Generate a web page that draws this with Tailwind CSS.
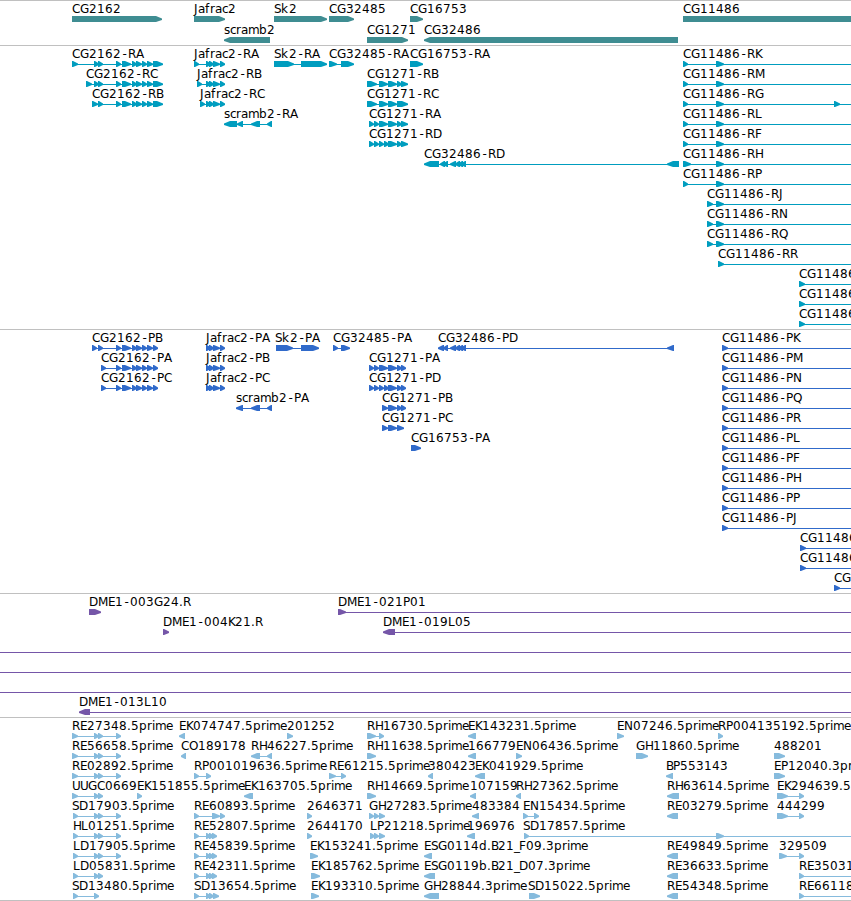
<!DOCTYPE html>
<html lang="en">
  <head>
    <meta charset="UTF-8" />
    <meta name="viewport" content="width=device-width, initial-scale=1.0" />
    <title>Genome Browser</title>
    <script src="https://cdn.jsdelivr.net/npm/@tailwindcss/browser@4"></script>
  </head>
  <body class="bg-white overflow-hidden">
    <main class="w-[851px] h-[901px] flex flex-col overflow-hidden border-b border-[#c0c0c0]">
      <section id="genes" class="border-t border-[#c0c0c0] pt-0.5 text-[#3f8d92]"></section>
      <section id="transcripts" class="border-t border-[#c0c0c0] pt-0.5 pb-px text-[#009dbf]"></section>
      <section id="proteins" class="border-t border-[#c0c0c0] pt-0.5 pb-px text-[#306aca]"></section>
      <section id="bacs" class="border-t border-[#c0c0c0] pt-0.5 pb-px text-[#7556a8]"></section>
      <section id="ests" class="border-t border-[#c0c0c0] pt-0.5 text-[#86bbdd]"></section>
    </main>

    <script>
      const EDGE = 860;

      // --- Exon sets shared by several features ---
      const cg2162 = [[98, 103], [116, 121], [122, 131], [132, 137], [136, 142], [142, 147], [147, 153]];
      const jafrac = [[206, 211], [209, 214], [213, 220], [220, 225]];
      const tail486 = [[450, 456], [455, 460], [458, 463], [461, 466]];
      const long11486 = [[683, 688], [716, 724]];
      const mid11486 = [[707, 713], [716, 724]];
      const est72 = [[72, 78], [94, 99], [98, 103], [116, 121]];
      const est73 = [[73, 78], [94, 99], [98, 103], [116, 121]];
      const est194 = [[194, 199], [206, 211], [209, 214], [212, 217]];

      // Each feature: [label, label x, direction, exons, line end]
      const tracks = {
        genes: [
          [
            ["CG2162", 72, 1, [[72, 162]]],
            ["Jafrac2", 194, 1, [[194, 225]]],
            ["Sk2", 274, 1, [[274, 327]]],
            ["CG32485", 329, 1, [[329, 354]]],
            ["CG16753", 410, 1, [[410, 423]]],
            ["CG11486", 683, 1, [[683, EDGE]]],
          ],
          [
            ["scramb2", 224, -1, [[224, 270]]],
            ["CG1271", 367, 1, [[367, 408]]],
            ["CG32486", 424, -1, [[424, 678]]],
          ],
        ],
        transcripts: [
          [
            ["CG2162-RA", 72, 1, [[72, 78], [94, 99], ...cg2162, [153, 163]]],
            ["Jafrac2-RA", 194, 1, [[194, 199], ...jafrac]],
            ["Sk2-RA", 274, 1, [[274, 294], [301, 327]]],
            ["CG32485-RA", 329, 1, [[329, 337], [341, 354]]],
            ["CG16753-RA", 410, 1, [[410, 423]]],
            ["CG11486-RK", 683, 1, long11486, EDGE],
          ],
          [
            ["CG2162-RC", 86, 1, [[86, 92], [94, 99], ...cg2162, [153, 163]]],
            ["Jafrac2-RB", 197, 1, [[197, 202], ...jafrac]],
            ["CG1271-RB", 367, 1, [[367, 377], [379, 388], [388, 397], [397, 402], [401, 408]]],
            ["CG11486-RM", 683, 1, long11486, EDGE],
          ],
          [
            ["CG2162-RB", 92, 1, [[92, 98], ...cg2162, [153, 163]]],
            ["Jafrac2-RC", 200, 1, [[200, 205], ...jafrac]],
            ["CG1271-RC", 367, 1, [[367, 377], [379, 388], [388, 397], [397, 408]]],
            ["CG11486-RG", 683, 1, [...long11486, [834, 840]], EDGE],
          ],
          [
            ["scramb2-RA", 224, -1, [[224, 237], [237, 243], [251, 260], [267, 272]]],
            ["CG1271-RA", 369, 1, [[369, 374], [374, 379], [379, 388], [388, 397], [397, 402], [401, 408]]],
            ["CG11486-RL", 683, 1, long11486, EDGE],
          ],
          [
            ["CG1271-RD", 369, 1, [[369, 374], [374, 379], [379, 384], [384, 389], [388, 397], [397, 402], [401, 408]]],
            ["CG11486-RF", 683, 1, long11486, EDGE],
          ],
          [
            ["CG32486-RD", 424, -1, [[424, 439], [440, 445], [443, 448], ...tail486, [667, 679]]],
            ["CG11486-RH", 683, 1, [[683, 691], [716, 724]], EDGE],
          ],
          [["CG11486-RP", 683, 1, long11486, EDGE]],
          [["CG11486-RJ", 707, 1, mid11486, EDGE]],
          [["CG11486-RN", 707, 1, mid11486, EDGE]],
          [["CG11486-RQ", 707, 1, mid11486, EDGE]],
          [["CG11486-RR", 718, 1, [[718, 724]], EDGE]],
          [["CG11486", 799, 1, [[799, 805]], EDGE]],
          [["CG11486", 799, 1, [[799, 805]], EDGE]],
          [["CG11486", 799, 1, [[799, 805]], EDGE]],
        ],
        proteins: [
          [
            ["CG2162-PB", 92, 1, [[92, 97], ...cg2162, [153, 158]]],
            ["Jafrac2-PA", 206, 1, jafrac],
            ["Sk2-PA", 275, 1, [[276, 293], [301, 319]]],
            ["CG32485-PA", 333, 1, [[333, 338], [341, 350]]],
            ["CG32486-PD", 438, -1, [[438, 444], [443, 448], ...tail486, [667, 674]]],
            ["CG11486-PK", 722, 1, [[722, 728]], EDGE],
          ],
          [
            ["CG2162-PA", 101, 1, [[101, 106], ...cg2162.slice(1), [153, 158]]],
            ["Jafrac2-PB", 206, 1, jafrac],
            ["CG1271-PA", 369, 1, [[369, 374], [374, 379], [379, 388], [388, 397], [397, 402], [401, 406]]],
            ["CG11486-PM", 722, 1, [[722, 728]], EDGE],
          ],
          [
            ["CG2162-PC", 101, 1, [[101, 106], ...cg2162.slice(1), [153, 158]]],
            ["Jafrac2-PC", 206, 1, jafrac],
            ["CG1271-PD", 369, 1, [[369, 374], [374, 379], [379, 384], [384, 389], [388, 397], [397, 402], [401, 406]]],
            ["CG11486-PN", 722, 1, [[722, 728]], EDGE],
          ],
          [
            ["scramb2-PA", 236, -1, [[236, 243], [251, 260], [267, 272]]],
            ["CG1271-PB", 382, 1, [[382, 388], [388, 397], [397, 402], [401, 406]]],
            ["CG11486-PQ", 722, 1, [[722, 728]], EDGE],
          ],
          [
            ["CG1271-PC", 382, 1, [[382, 388], [388, 397], [397, 404]]],
            ["CG11486-PR", 722, 1, [[722, 728]], EDGE],
          ],
          [
            ["CG16753-PA", 411, 1, [[411, 421]]],
            ["CG11486-PL", 722, 1, [[722, 728]], EDGE],
          ],
          [["CG11486-PF", 722, 1, [[722, 728]], EDGE]],
          [["CG11486-PH", 722, 1, [[722, 728]], EDGE]],
          [["CG11486-PP", 722, 1, [[722, 728]], EDGE]],
          [["CG11486-PJ", 722, 1, [[722, 728]], EDGE]],
          [["CG11486", 800, 1, [[800, 806]], EDGE]],
          [["CG11486", 800, 1, [[800, 806]], EDGE]],
          [["CG11486", 834, 1, [[834, 840]], EDGE]],
        ],
        bacs: [
          [
            ["DME1-003G24.R", 89, 1, [[89, 101]]],
            ["DME1-021P01", 338, 1, [[338, 346]], EDGE],
          ],
          [
            ["DME1-004K21.R", 163, 1, [[163, 169]]],
            ["DME1-019L05", 383, -1, [[383, 395]], EDGE],
          ],
          [["", 0, 1, [[-10, -5]], EDGE]],
          [["", 0, 1, [[-10, -5]], EDGE]],
          [["", 0, 1, [[-10, -5]], EDGE]],
          [["DME1-013L10", 79, -1, [[79, 90]], EDGE]],
        ],
        ests: [
          [
            ["RE27348.5prime", 72, 1, est72],
            ["EK074747.5prime", 179, -1, [[179, 185]]],
            ["201252", 287, 1, [[287, 293]]],
            ["RH16730.5prime", 367, 1, [[367, 376], [379, 384]]],
            ["EK143231.5prime", 468, -1, [[468, 476]]],
            ["EN07246.5prime", 617, 1, [[617, 624]]],
            ["RP004135192.5prime", 718, 1, [[718, 723]]],
          ],
          [
            ["RE56658.5prime", 72, 1, est72],
            ["CO189178", 181, -1, [[181, 186]]],
            ["RH46227.5prime", 251, -1, [[251, 260], [267, 272]]],
            ["RH11638.5prime", 367, 1, [[367, 376]]],
            ["166779", 468, -1, [[468, 476]]],
            ["EN06436.5prime", 516, 1, [[516, 522]]],
            ["GH11860.5prime", 636, 1, [[636, 648]]],
            ["488201", 774, 1, [[774, 785]]],
          ],
          [
            ["RE02892.5prime", 72, 1, est72],
            ["RP001019636.5prime", 194, 1, [[194, 199], [206, 211]]],
            ["RE61215.5prime", 329, 1, [[329, 336], [341, 346]]],
            ["380423", 428, -1, [[428, 433]]],
            ["EK041929.5prime", 475, -1, [[475, 485]]],
            ["BP553143", 666, -1, [[666, 673]]],
            ["EP12040.3prime", 774, 1, [[774, 785]]],
          ],
          [
            ["UUGC0669", 72, 1, [[72, 78], [94, 99], [98, 103]]],
            ["EK151855.5prime", 137, 1, [[137, 142]]],
            ["EK163705.5prime", 244, -1, [[244, 253]]],
            ["RH14669.5prime", 367, 1, [[367, 376]]],
            ["107159", 470, -1, [[470, 476]]],
            ["RH27362.5prime", 516, -1, [[516, 521]]],
            ["RH63614.5prime", 667, -1, [[667, 679]]],
            ["EK294639.5prime", 777, 1, [[777, 788], [799, 804]]],
          ],
          [
            ["SD17903.5prime", 72, 1, est73],
            ["RE60893.5prime", 194, 1, [[194, 199], [212, 220], [220, 225]]],
            ["2646371", 307, 1, [[307, 312]]],
            ["GH27283.5prime", 369, 1, [[369, 374], [374, 379], [379, 385]]],
            ["483384", 472, -1, [[472, 479]]],
            ["EN15434.5prime", 523, 1, [[523, 528], [534, 539]]],
            ["RE03279.5prime", 667, -1, [[667, 678]]],
            ["444299", 777, 1, [[777, 788], [799, 804]]],
          ],
          [
            ["HL01251.5prime", 73, 1, est73],
            ["RE52807.5prime", 194, 1, est194],
            ["2644170", 307, 1, [[307, 312]]],
            ["LP21218.5prime", 370, 1, [[370, 375], [374, 379], [379, 385]]],
            ["196976", 467, -1, [[467, 475]]],
            ["SD17857.5prime", 523, 1, [[524, 529], [716, 724]], EDGE],
          ],
          [
            ["LD17905.5prime", 73, 1, est73],
            ["RE45839.5prime", 194, 1, est194],
            ["EK153241.5prime", 310, 1, [[310, 318]]],
            ["ESG0114d.B21_F09.3prime", 424, -1, [[424, 432]]],
            ["RE49849.5prime", 667, -1, [[667, 678]]],
            ["329509", 779, 1, [[779, 787], [799, 804]]],
          ],
          [
            ["LD05831.5prime", 73, 1, [[73, 78], [94, 99], [98, 103]]],
            ["RE42311.5prime", 194, 1, est194],
            ["EK185762.5prime", 311, 1, [[311, 320]]],
            ["ESG0119b.B21_D07.3prime", 424, -1, [[424, 435]]],
            ["RE36633.5prime", 667, -1, [[667, 678]]],
            ["RE35031.5prime", 799, 1, [[799, 804]], EDGE],
          ],
          [
            ["SD13480.5prime", 72, 1, [[73, 78], [94, 99]]],
            ["SD13654.5prime", 194, 1, [[194, 199], [206, 211], [209, 214], [213, 219]]],
            ["EK193310.5prime", 311, 1, [[311, 319]]],
            ["GH28844.3prime", 424, -1, [[424, 439]]],
            ["SD15022.5prime", 528, 1, [[529, 540]]],
            ["RE54348.5prime", 667, -1, [[667, 678]]],
            ["RE66118.5prime", 799, 1, [[799, 804]], EDGE],
          ],
        ],
      };

      const advance = {
        A: 9, B: 7, D: 9, E: 7, F: 7, G: 9, H: 8, J: 4, K: 7, L: 7, M: 10, N: 9, O: 9, P: 7, Q: 9, S: 7,
        a: 7, c: 6, e: 7, f: 5, i: 3, m: 11, r: 5, s: 6, "-": 7, ".": 4, _: 5,
      };

      function drawLabel(label, x) {
        const xs = [];
        for (const ch of label) {
          // the hyphen is narrow, centre it in its cell
          xs.push(ch === "-" ? x + 1.5 : x);
          x += advance[ch] || 8;
        }
        return `<text x="${xs.join(" ")}" y="10" class="fill-black text-[12px] font-['DejaVu_Sans',sans-serif]">${label}</text>`;
      }

      // Box with a pointed end, or a plain triangle when it is short
      function drawExon([start, end], dir) {
        const head = Math.min(6, end - start - 1);
        if (dir > 0) {
          const neck = end - head;
          return `<path d="M${start} 13H${neck}L${end} 15.5V17L${neck} 19H${start}Z"/>`;
        }
        const neck = start + head;
        return `<path d="M${end} 13H${neck}L${start} 15.5V17L${neck} 19H${end}Z"/>`;
      }

      function drawFeature([label, x, dir, exons, lineEnd]) {
        const start = exons[0][0];
        const end = lineEnd || exons[exons.length - 1][1];
        let out = "";
        if (lineEnd || exons.length > 1) {
          out += `<rect x="${start}" y="16" width="${end - start}" height="1"/>`;
        }
        out += exons.map((exon) => drawExon(exon, dir)).join("");
        return label ? out + drawLabel(label, x) : out;
      }

      for (const [id, rows] of Object.entries(tracks)) {
        const height = id === "genes" ? "h-[21px]" : "h-5";
        document.getElementById(id).innerHTML = rows
          .map((row) => `<svg class="block w-full ${height} overflow-visible fill-current">${row.map(drawFeature).join("")}</svg>`)
          .join("");
      }
    </script>
  </body>
</html>
